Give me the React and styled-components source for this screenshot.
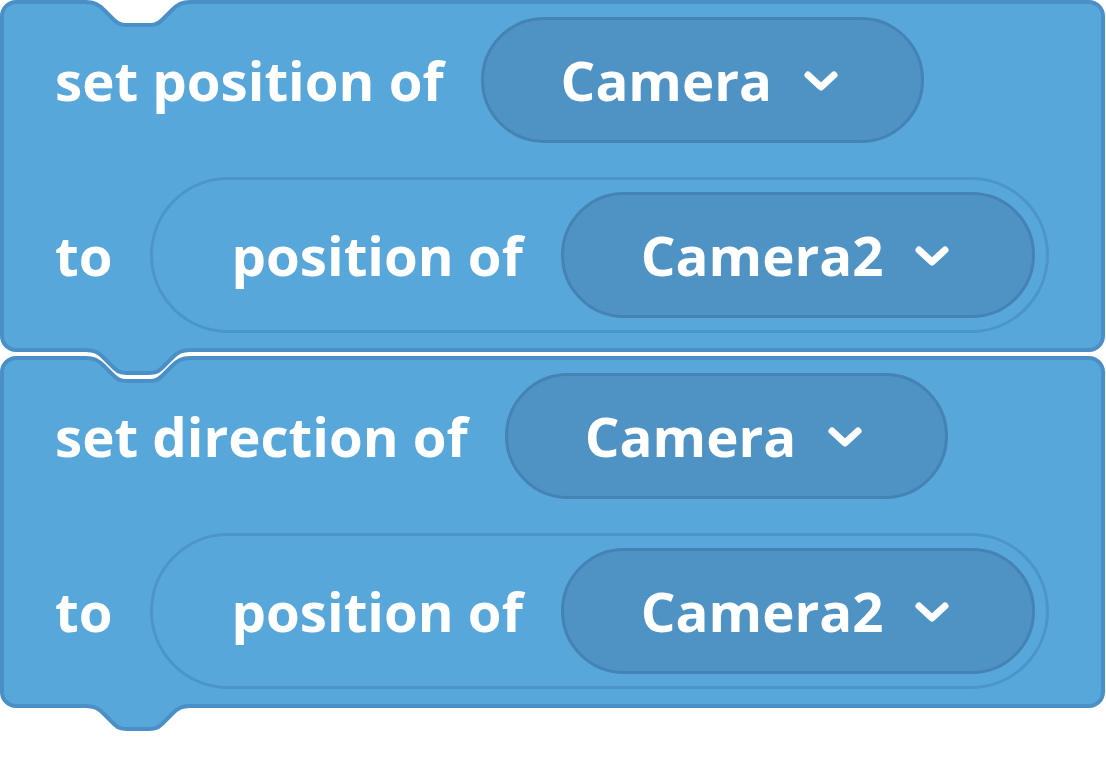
import React from 'react';
import styled, {createGlobalStyle} from 'styled-components';

const GlobalStyle = createGlobalStyle`
  html, body {
    margin: 0;
    padding: 0;
    background: #ffffff;
  }
  body {
    font-family: "Open Sans", "DejaVu Sans", sans-serif;
  }
`;

const FILL = '#57a7db';
const EDGE = '#4a8fc5';

const Stack = styled.div`
  display: flex;
  flex-direction: column;
  gap: 4px;
  padding: 0 0 40px 0;
  width: 1105px;
`;

const Block = styled.div`
  position: relative;
  z-index: ${p => p.$z};
  display: flex;
  flex-direction: column;
  gap: 34px;
  padding: 13px 0 15px 51px;
  background: ${FILL};
  border: 4px solid ${EDGE};
  border-radius: 16px;
`;

const Row = styled.div`
  display: flex;
  align-items: center;
  gap: 37px;
`;

const Label = styled.span`
  color: #ffffff;
  font-size: 54.6px;
  font-weight: 700;
  white-space: nowrap;
`;

const Dropdown = styled.div`
  box-sizing: border-box;
  display: flex;
  align-items: center;
  gap: 31px;
  height: 126px;
  padding: 0 82px 0 77px;
  background: #4f93c4;
  border: 3px solid #4483b4;
  border-radius: 63px;
`;

const Reporter = styled.div`
  box-sizing: border-box;
  display: flex;
  align-items: center;
  gap: 38px;
  height: 156px;
  padding: 0 11px 0 79px;
  background: ${FILL};
  border: 3px solid #4c95ca;
  border-radius: 78px;
`;

const Notch = styled.svg`
  position: absolute;
  left: 82px;
  overflow: visible;
  ${p => (p.$bottom ? 'top: 100%;' : 'top: -4px;')}
`;

const Chevron = styled.svg`
  flex: none;
  display: block;
  margin-top: 2px;
`;

const curve = y =>
  `C8,${y} 12,${y + 2} 18,${y + 8} L28,${y + 18} C33,${y + 23} 37,${y + 23} 44,${y + 23} ` +
  `H60 C67,${y + 23} 71,${y + 23} 76,${y + 18} L86,${y + 8} C92,${y + 2} 96,${y} 104,${y}`;

function NotchShape({bottom}) {
  return (
    <Notch $bottom={bottom} width="104" height="28" viewBox="0 0 104 28">
      <path d={`M0,0 L0,2 ${curve(2)} L104,0 Z`} fill={bottom ? FILL : '#ffffff'} />
      <path d={`M-2,2 H0 ${curve(2)} H106`} fill="none" stroke={EDGE} strokeWidth="4" />
    </Notch>
  );
}

function Menu({children}) {
  return (
    <Dropdown>
      <Label>{children}</Label>
      <Chevron width="36" height="22" viewBox="0 0 36 22">
        <path
          d="M5,5 L18,17 L31,5"
          fill="none"
          stroke="#ffffff"
          strokeWidth="7"
          strokeLinecap="round"
          strokeLinejoin="round"
        />
      </Chevron>
    </Dropdown>
  );
}

function CameraBlock({verb, z}) {
  return (
    <Block $z={z}>
      <NotchShape />
      <Row>
        <Label>{verb}</Label>
        <Menu>Camera</Menu>
      </Row>
      <Row>
        <Label>to</Label>
        <Reporter>
          <Label>position of</Label>
          <Menu>Camera2</Menu>
        </Reporter>
      </Row>
      <NotchShape bottom />
    </Block>
  );
}

export default function App() {
  return (
    <>
      <GlobalStyle />
      <Stack>
        <CameraBlock verb="set position of" z={2} />
        <CameraBlock verb="set direction of" z={1} />
      </Stack>
    </>
  );
}
